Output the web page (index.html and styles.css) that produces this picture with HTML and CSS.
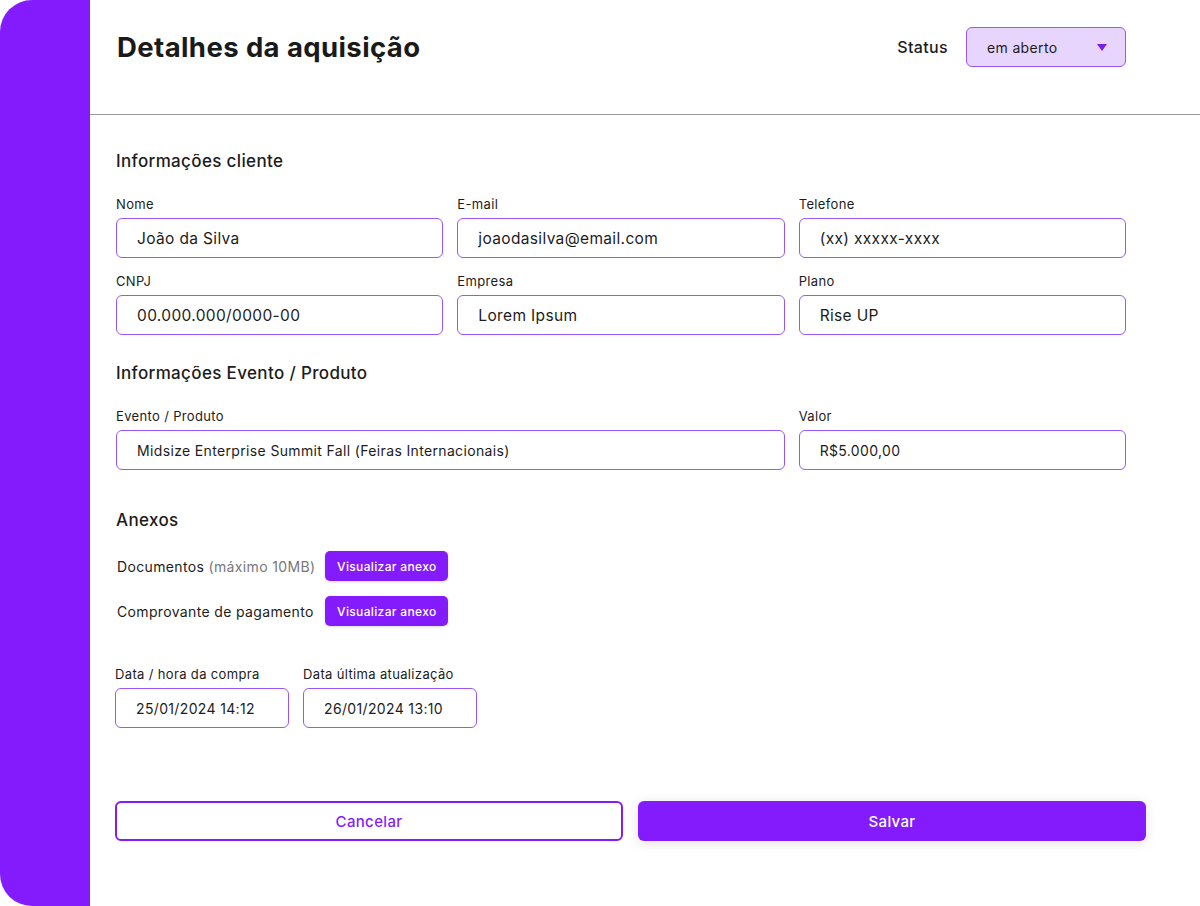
FILE: index.html
```html
<!DOCTYPE html>
<html lang="pt-BR">
<head>
    <meta charset="UTF-8">
    <meta name="viewport" content="width=device-width, initial-scale=1.0">
    <title>Detalhes da aquisição</title>
    <link rel="stylesheet" href="styles.css">
</head>
<body>
    <div class="layout">
        <aside class="sidebar"></aside>

        <main class="content">
            <header class="page-header">
                <h1>Detalhes da aquisição</h1>
                <div class="status">
                    <span class="status-label">Status</span>
                    <div class="status-select">
                        <span>em aberto</span>
                        <svg width="10" height="7" viewBox="0 0 10 7"><path d="M0 0h10L5 7z" fill="#7a1cf0"/></svg>
                    </div>
                </div>
            </header>

            <section class="form">
                <h2>Informações cliente</h2>
                <div class="grid-3">
                    <div class="field">
                        <label>Nome</label>
                        <div class="box">João da Silva</div>
                    </div>
                    <div class="field">
                        <label>E-mail</label>
                        <div class="box">joaodasilva@email.com</div>
                    </div>
                    <div class="field">
                        <label>Telefone</label>
                        <div class="box">(xx) xxxxx-xxxx</div>
                    </div>
                    <div class="field">
                        <label>CNPJ</label>
                        <div class="box">00.000.000/0000-00</div>
                    </div>
                    <div class="field">
                        <label>Empresa</label>
                        <div class="box">Lorem Ipsum</div>
                    </div>
                    <div class="field">
                        <label>Plano</label>
                        <div class="box">Rise UP</div>
                    </div>
                </div>

                <h2 class="section-gap">Informações Evento / Produto</h2>
                <div class="grid-3">
                    <div class="field span-2">
                        <label>Evento / Produto</label>
                        <div class="box small">Midsize Enterprise Summit Fall (Feiras Internacionais)</div>
                    </div>
                    <div class="field">
                        <label>Valor</label>
                        <div class="box small">R$5.000,00</div>
                    </div>
                </div>

                <h2 class="section-gap-lg">Anexos</h2>
                <div class="attachments">
                    <span class="attach-label">Documentos <span class="muted">(máximo 10MB)</span></span>
                    <button class="btn-attach">Visualizar anexo</button>
                    <span class="attach-label">Comprovante de pagamento</span>
                    <button class="btn-attach">Visualizar anexo</button>
                </div>

                <div class="dates">
                    <div class="field">
                        <label>Data / hora da compra</label>
                        <div class="box small">25/01/2024 14:12</div>
                    </div>
                    <div class="field">
                        <label>Data última atualização</label>
                        <div class="box small">26/01/2024 13:10</div>
                    </div>
                </div>

                <div class="actions">
                    <button class="btn btn-outline">Cancelar</button>
                    <button class="btn btn-primary">Salvar</button>
                </div>
            </section>
        </main>
    </div>
</body>
</html>
```

FILE: styles.css
```css
/* base */
body {
    margin: 0;
    background: #ffffff;
    font-family: Inter, "Noto Sans", sans-serif;
    letter-spacing: 0.35px;
    color: #1c1c1c;
}

.layout {
    display: flex;
    height: 906px;
}

/* barra lateral roxa */
.sidebar {
    width: 90px;
    flex-shrink: 0;
    background: #841bfd;
    border-radius: 32px 0 0 32px;
}

.content {
    flex: 1;
    min-width: 0;
}

/* cabeçalho */
.page-header {
    display: flex;
    justify-content: space-between;
    align-items: center;
    height: 94px;
    padding: 0 74px 20px 27px;
    border-bottom: 1px solid #9a9a9a;
}

.page-header h1 {
    margin: 0;
    font-size: 27.5px;
    font-weight: 700;
    letter-spacing: 0.4px;
    color: #1a1a1a;
}

.status {
    display: flex;
    align-items: center;
    gap: 18px;
}

.status-label {
    font-size: 16px;
    font-weight: 500;
}

.status-select {
    display: flex;
    justify-content: space-between;
    align-items: center;
    box-sizing: border-box;
    width: 160px;
    height: 40px;
    padding: 0 18px 0 20px;
    background: #e7d5fd;
    border: 1.5px solid #9a57f6;
    border-radius: 6px;
    font-size: 14px;
}

/* formulário */
.form {
    padding: 35px 74px 0 26px;
}

.form h2 {
    margin: 0 0 23px;
    font-size: 17px;
    font-weight: 500;
    line-height: 22px;
}

.section-gap {
    margin-top: 27px !important;
}

.section-gap-lg {
    margin-top: 39px !important;
    margin-bottom: 20px !important;
}

.grid-3 {
    display: grid;
    grid-template-columns: repeat(3, 1fr);
    column-gap: 14px;
    row-gap: 14px;
}

.span-2 {
    grid-column: span 2;
}

.field label {
    display: block;
    margin-bottom: 5px;
    font-size: 13px;
    line-height: 18px;
}

.box {
    display: flex;
    align-items: center;
    box-sizing: border-box;
    height: 40px;
    padding: 0 20px;
    border: 1.5px solid #9a57f6;
    border-radius: 6px;
    font-size: 15.5px;
}

.box.small {
    font-size: 14px;
}

/* anexos */
.attachments {
    display: grid;
    grid-template-columns: auto auto;
    justify-content: start;
    align-items: center;
    column-gap: 10px;
    row-gap: 15px;
    padding-left: 1px;
}

.attach-label {
    font-size: 14px;
}

.muted {
    color: #777777;
}

.btn-attach {
    width: 123px;
    height: 30px;
    background: #841bfd;
    color: #ffffff;
    border: none;
    border-radius: 5px;
    font-family: inherit;
    letter-spacing: inherit;
    font-size: 12px;
    font-weight: 500;
    box-shadow: 0 1px 3px rgba(0, 0, 0, 0.15);
}

/* datas */
.dates {
    display: flex;
    gap: 14px;
    margin-top: 39px;
    margin-left: -1px;
}

.dates .field {
    width: 174px;
}

/* botões finais */
.actions {
    display: flex;
    gap: 15px;
    margin: 73px -21px 0 -1px;
}

.btn {
    flex: none;
    width: 508px;
    height: 40px;
    padding: 0;
    border-radius: 6px;
    font-family: inherit;
    letter-spacing: inherit;
    font-size: 15px;
    font-weight: 500;
    cursor: pointer;
}

.btn-outline {
    background: #ffffff;
    color: #841bfd;
    border: 2px solid #841bfd;
}

.btn-primary {
    background: #841bfd;
    color: #ffffff;
    border: none;
    box-shadow: 0 2px 12px rgba(0, 0, 0, 0.12);
}
```
